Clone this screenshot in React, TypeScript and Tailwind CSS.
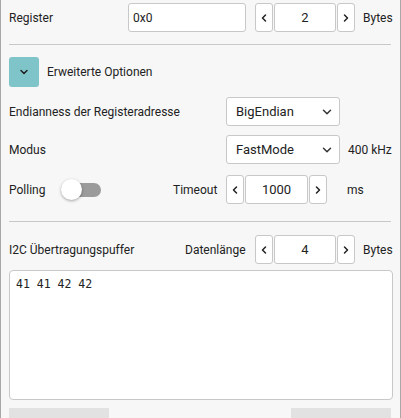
import { ChevronDown, ChevronLeft, ChevronRight } from "lucide-react";

const Stepper = ({ value, inputW }: { value: string; inputW: string }) => (
  <div className="flex h-[29px] gap-px shrink-0">
    <button className="w-[18px] h-full shrink-0 flex items-center justify-center bg-white border border-[#c8c8c8] rounded-[3px]">
      <ChevronLeft size={12} strokeWidth={3} className="text-[#222]" />
    </button>
    <input
      readOnly
      value={value}
      className={`${inputW} shrink-0 h-full bg-white border border-[#c8c8c8] rounded-[3px] text-center text-[13px] text-[#222] outline-none`}
    />
    <button className="w-[18px] h-full shrink-0 flex items-center justify-center bg-white border border-[#c8c8c8] rounded-[3px]">
      <ChevronRight size={12} strokeWidth={3} className="text-[#222]" />
    </button>
  </div>
);

const Select = ({ value }: { value: string }) => (
  <div className="w-[114px] h-[29px] shrink-0 bg-white border border-[#c8c8c8] rounded-[3px] flex items-center justify-between pl-[9px] pr-[5px]">
    <span className="text-[13px] text-[#222]">{value}</span>
    <ChevronDown size={14} strokeWidth={2.5} className="text-[#333]" />
  </div>
);

export default function App() {
  return (
    <div
      className="w-[401px] h-[418px] overflow-hidden bg-[#f7f7f7] border-x border-[#a8a8a8] px-[8px] text-[12px] text-[#222] whitespace-nowrap"
      style={{ fontFamily: "Roboto, 'Liberation Sans', sans-serif" }}
    >
      {/* Register row */}
      <div className="flex items-center h-[29px] mt-[3px]">
        <span className="w-[119px] shrink-0">Register</span>
        <input
          readOnly
          value="0x0"
          className="w-[118px] shrink-0 h-full bg-white border border-[#c8c8c8] rounded-[3px] px-[4px] text-[12px] outline-none"
        />
        <div className="ml-[9px] shrink-0">
          <Stepper value="2" inputW="w-[62px]" />
        </div>
        <span className="ml-[8px]">Bytes</span>
      </div>

      <div className="h-px bg-[#c8c8c8] mt-[12px] mr-[1px]" />

      {/* expander */}
      <div className="flex items-center mt-[12px] h-[30px]">
        <button className="w-[30px] h-[30px] shrink-0 rounded-[3px] bg-[#7fc4c9] flex items-center justify-center">
          <ChevronDown size={12} strokeWidth={3} className="text-[#222]" />
        </button>
        <span className="ml-[8px]">Erweiterte Optionen</span>
      </div>

      <div className="flex items-center h-[29px] mt-[10px]">
        <span className="w-[217px] shrink-0">Endianness der Registeradresse</span>
        <Select value="BigEndian" />
      </div>

      <div className="flex items-center h-[29px] mt-[9px]">
        <span className="w-[217px] shrink-0">Modus</span>
        <Select value="FastMode" />
        <span className="ml-[8px]">400 kHz</span>
      </div>

      <div className="flex items-center h-[29px] mt-[11px]">
        <span className="w-[52px] shrink-0">Polling</span>
        <div className="relative w-[40px] h-[22px] shrink-0 flex items-center">
          <div className="absolute left-[6px] right-0 h-[14px] rounded-full bg-[#9b9b9b]" />
          <div className="absolute left-0 w-[21px] h-[21px] rounded-full bg-white shadow-[0_1px_3px_rgba(0,0,0,0.35)]" />
        </div>
        <span className="ml-[72px] w-[53px] shrink-0">Timeout</span>
        <Stepper value="1000" inputW="w-[63px]" />
        <span className="ml-[20px]">ms</span>
      </div>

      <div className="h-px bg-[#c8c8c8] mt-[17px] mr-[1px]" />

      <div className="flex items-center h-[29px] mt-[13px]">
        <span className="w-[176px] shrink-0">I2C Übertragungspuffer</span>
        <span className="w-[70px] shrink-0">Datenlänge</span>
        <Stepper value="4" inputW="w-[62px]" />
        <span className="ml-[8px]">Bytes</span>
      </div>

      <textarea
        readOnly
        value="41 41 42 42"
        className="block mt-[6px] w-[384px] h-[130px] bg-white border border-[#c8c8c8] rounded-[4px] px-[6px] py-[5px] text-[11.5px] resize-none outline-none"
        style={{ fontFamily: "'DejaVu Sans Mono', monospace" }}
      />

      <div className="flex justify-between mt-[8px] mr-[1px]">
        <div className="w-[100px] h-[30px] bg-[#e2e2e2]" />
        <div className="w-[100px] h-[30px] bg-[#e2e2e2]" />
      </div>
    </div>
  );
}
